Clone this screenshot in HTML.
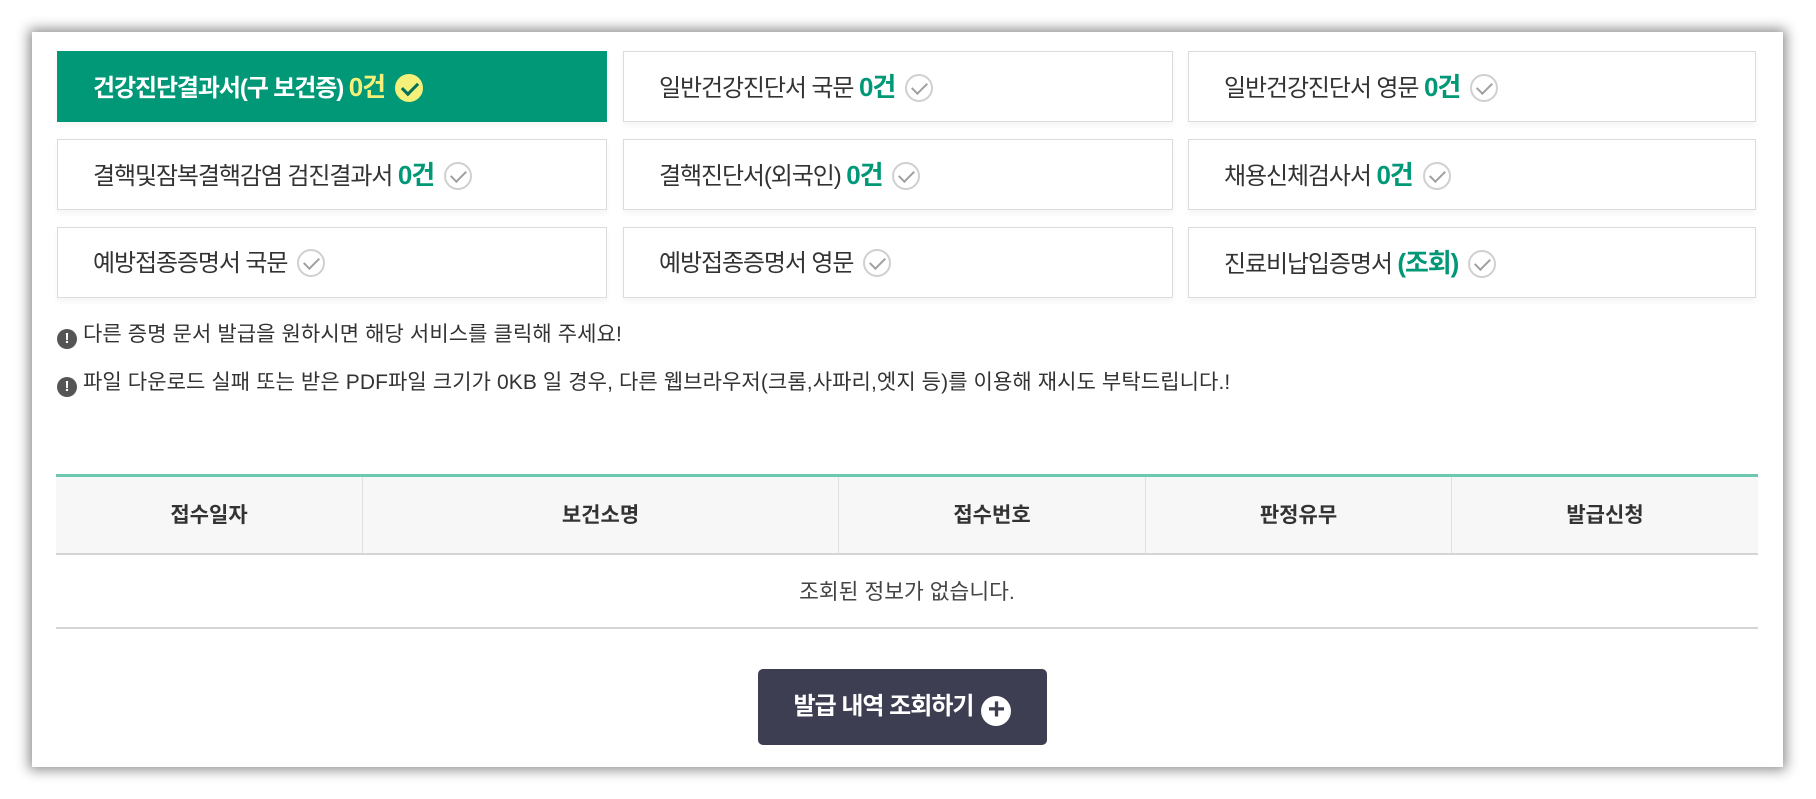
<!DOCTYPE html>
<html><head><meta charset="utf-8"><style>
*{margin:0;padding:0;box-sizing:border-box}
body{width:1816px;height:799px;background:#fff;position:relative;overflow:hidden;font-family:"Liberation Sans","Noto Sans CJK KR",sans-serif;color:#333}
.panel{position:absolute;left:32px;top:32px;width:1751px;height:735px;background:#fff;box-shadow:0 0 12px 3px rgba(0,0,0,.45)}
.b{position:absolute;height:71px;border:1px solid #dcdcdc;background:#fff;font-size:24px;line-height:71px;padding-left:35px;letter-spacing:-1.1px;color:#333;white-space:nowrap;box-shadow:0 4px 6px rgba(0,0,0,.04)}
.b.on{background:#009877;border-color:#009877;color:#fff;font-weight:bold}
.n{color:#009877;font-weight:bold;font-size:26px}
.on .n{color:#f4f07a}
.ck{display:inline-block;width:28px;height:28px;border:2px solid #d0d0d0;border-radius:50%;vertical-align:middle;margin-left:10px;position:relative;top:-2px}
.ck:after{content:"";position:absolute;left:8px;top:3px;width:7px;height:13px;border:solid #a0a0a0;border-width:0 2px 2px 0;transform:rotate(45deg)}
.on .ck{background:#f4f07a;border-color:#f4f07a}
.on .ck:after{border-color:#00705a;border-width:0 3px 3px 0}
.note{position:absolute;left:57px;font-size:21px;color:#333;letter-spacing:0.1px}
.note i{display:inline-block;width:20px;height:20px;border-radius:50%;background:#555;color:#fff;font-style:normal;font-weight:bold;font-size:15px;text-align:center;line-height:20px;margin-right:6px;vertical-align:-2px}
.tbl{position:absolute;left:56px;top:474px;width:1702px;border-top:3px solid #6cc9b0}
.th{height:78px;background:#f7f7f7;border-bottom:2px solid #d5d5d5;display:flex}
.th div{text-align:center;line-height:78px;font-size:21px;font-weight:bold;color:#333;border-left:1px solid #e0e0e0}
.th div:first-child{border-left:none}
.td{height:74px;border-bottom:2px solid #d5d5d5;text-align:center;line-height:74px;font-size:21.5px;color:#444}
.btn{position:absolute;left:758px;top:669px;width:289px;height:76px;background:#3d3e52;border-radius:5px;color:#fff;font-size:24px;font-weight:bold;text-align:center;line-height:76px;letter-spacing:-1px}
.btn span{display:inline-block;width:30px;height:30px;border-radius:50%;background:#fff;color:#3d3e52;font-size:30px;line-height:28px;vertical-align:-5px;margin-left:8px;letter-spacing:0}
</style></head><body>
<div class="panel"></div>
<div class="b on" style="left:57px;top:51px;width:550px">건강진단결과서(구 보건증) <span class="n">0건</span><span class="ck"></span></div>
<div class="b" style="left:623px;top:51px;width:550px">일반건강진단서 국문 <span class="n">0건</span><span class="ck"></span></div>
<div class="b" style="left:1188px;top:51px;width:568px">일반건강진단서 영문 <span class="n">0건</span><span class="ck"></span></div>
<div class="b" style="left:57px;top:139px;width:550px">결핵및잠복결핵감염 검진결과서 <span class="n">0건</span><span class="ck"></span></div>
<div class="b" style="left:623px;top:139px;width:550px">결핵진단서(외국인) <span class="n">0건</span><span class="ck"></span></div>
<div class="b" style="left:1188px;top:139px;width:568px">채용신체검사서 <span class="n">0건</span><span class="ck"></span></div>
<div class="b" style="left:57px;top:227px;width:550px">예방접종증명서 국문<span class="ck"></span></div>
<div class="b" style="left:623px;top:227px;width:550px">예방접종증명서 영문<span class="ck"></span></div>
<div class="b" style="left:1188px;top:227px;width:568px">진료비납입증명서 <span class="n">(조회)</span><span class="ck"></span></div>
<div class="note" style="top:318px"><i>!</i>다른 증명 문서 발급을 원하시면 해당 서비스를 클릭해 주세요!</div>
<div class="note" style="top:366px"><i>!</i>파일 다운로드 실패 또는 받은 PDF파일 크기가 0KB 일 경우, 다른 웹브라우저(크롬,사파리,엣지 등)를 이용해 재시도 부탁드립니다.!</div>
<div class="tbl">
<div class="th"><div style="width:306px">접수일자</div><div style="width:476px">보건소명</div><div style="width:307px">접수번호</div><div style="width:306px">판정유무</div><div style="width:307px">발급신청</div></div>
<div class="td">조회된 정보가 없습니다.</div>
</div>
<div class="btn">발급 내역 조회하기<span>+</span></div>
</body></html>
